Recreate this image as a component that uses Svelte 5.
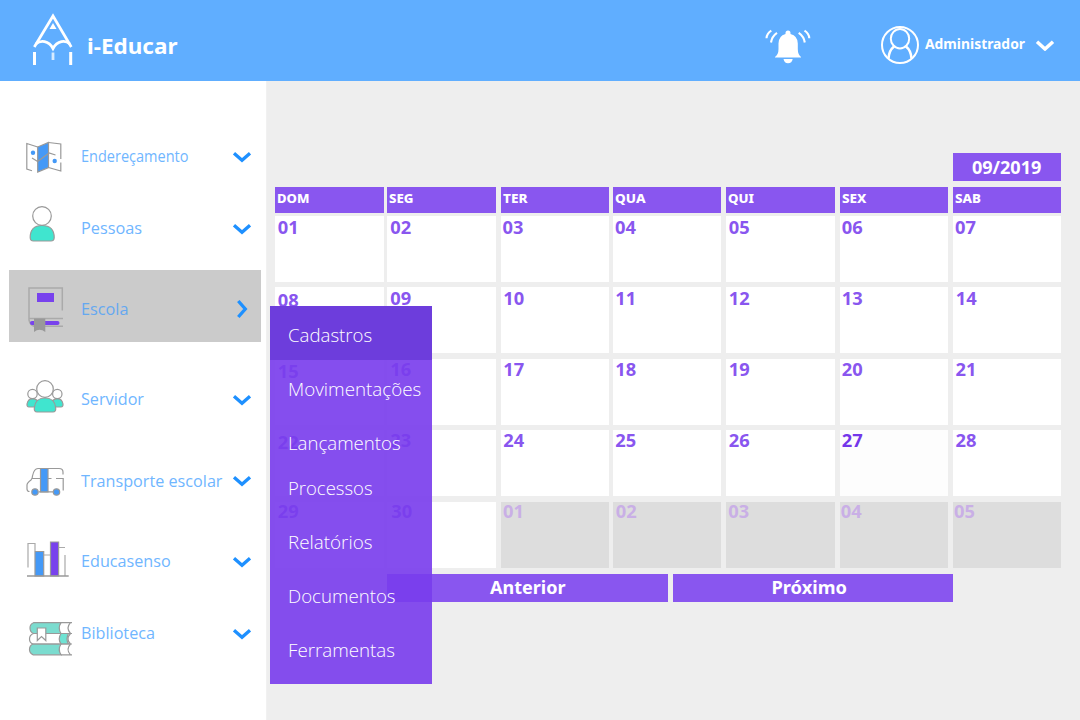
<script>
  const nav = [
    { id: 'map', label: 'Endereçamento', top: 120, w: 107.5 },
    { id: 'person', label: 'Pessoas', top: 192, w: 61 },
    { id: 'book', label: 'Escola', top: 270, w: 47.5, active: true },
    { id: 'team', label: 'Servidor', top: 363, w: 63 },
    { id: 'bus', label: 'Transporte escolar', top: 445, w: 141.5 },
    { id: 'bars', label: 'Educasenso', top: 525, w: 89.7 },
    { id: 'books', label: 'Biblioteca', top: 597, w: 74 }
  ];
  const gapBefore = (i) => (i === 0 ? nav[0].top - 81 : nav[i].top - nav[i - 1].top - 72);

  const menu = [
    { label: 'Cadastros', w: 84.2 },
    { label: 'Movimentações', w: 133.3 },
    { label: 'Lançamentos', w: 112.7 },
    { label: 'Processos', w: 84.5, short: true },
    { label: 'Relatórios', w: 84.5 },
    { label: 'Documentos', w: 107.5 },
    { label: 'Ferramentas', w: 107 }
  ];

  const days = [
    ['DOM', 32.5], ['SEG', 24.5], ['TER', 24.5], ['QUA', 30.5], ['QUI', 26], ['SEX', 24.5], ['SAB', 26]
  ];

  const inset = [
    [2.5, 3, 1.5, 2, 2.5, 2, 2],
    [2.5, 3, 2.3, 2.3, 2.5, 2, 2.8],
    [2.5, 3, 2.3, 2.3, 2.5, 2, 2.5],
    [2.5, 3, 2.3, 2.3, 2.5, 2, 2.5],
    [2.5, 4, 2, 2.7, 2, 1, 1]
  ];
  const lineHeights = [22, 21, 20, 19, 18];
  const weeks = inset.map((row, r) => ({
    line: lineHeights[r],
    cells: row.map((pad, c) => {
      const n = r * 7 + c + 1;
      return {
        text: String(n > 30 ? n - 30 : n).padStart(2, '0'),
        next: n > 30,
        today: n === 27,
        low: c === 0 && r > 0 && r < 4,
        pad
      };
    })
  }));

  function fit(node, width) {
    const natural = node.getBoundingClientRect().width;
    if (natural) node.style.transform = `scaleX(${width / natural})`;
  }
</script>

<div class="app">
  <header>
    <div class="brand">
      <svg width="44" height="56" viewBox="31 12 44 56" fill="none" stroke="#fff">
        <path d="M34.300 47 L53 16 L71.300 47" stroke-width="2.700" />
        <path d="M35.800 44 Q40 40.700 44.500 41.700 Q50 43 53 48.500 Q56 43 61.500 41.700 Q66 40.700 70 44" stroke-width="2.800" />
        <path d="M53 23 L56.500 29 H49.500 Z" fill="#fff" stroke="none" />
        <path d="M34.500 52 V65 M70.700 52 V65" stroke-width="3" />
        <path d="M53 52.500 V60" stroke-width="2.800" opacity=".75" />
      </svg>
      <span class="name fit" use:fit={90.5}>i-Educar</span>
    </div>
    <svg class="bell" width="50" height="40" viewBox="763 27 50 40">
      <path fill="#fff" d="M775 57 Q778.500 54.500 778.500 49 V43.500 Q778.500 36 785.500 34 V33 a2.500 2.500 0 0 1 5 0 V34 Q797.800 36 797.800 43.500 V49 Q797.800 54.500 801 57 V57.600 H775 Z M783.500 59 H792.700 Q792 63.200 788 63.200 Q784.300 63.200 783.500 59 Z" />
      <g fill="none" stroke="#fff" stroke-width="2.100">
        <path d="M777 32.800 Q771.800 36.500 771 42.500 M771.300 30.700 Q766.800 33.500 766.500 38.300 M798.700 32.800 Q804 36.500 804.800 42.500 M804.500 30.700 Q809 33.500 809.300 38.300" />
      </g>
    </svg>
    <div class="user">
      <svg width="40" height="40" viewBox="880 25 40 40" fill="none" stroke="#fff" stroke-width="2">
        <circle cx="900" cy="45" r="18" />
        <ellipse cx="900" cy="38.700" rx="9.200" ry="9.700" />
        <path d="M894 46.500 Q889 50.500 888.500 58.500 M906 46.500 Q911 50.500 911.500 58.500" stroke-width="2.500" />
      </svg>
      <span class="uname fit" use:fit={100}>Administrador</span>
      <svg width="20" height="12" viewBox="1035 39 20 12" fill="none" stroke="#fff" stroke-width="3.500"><path d="M1037 41.800 L1045 49 L1053 41.800" /></svg>
    </div>
  </header>

  <div class="body">
    <nav>
      {#each nav as item, i}
        <a class="item" class:active={item.active} class:tight={item.id === 'bus'} style="margin-top:{gapBefore(i)}px">
          <svg class="icon" width="60" height="72" viewBox="17 {item.top} 60 72" fill="none" stroke="#999" stroke-width="1.200">
            {#if item.id === 'map'}
              <path d="M37.700 147 L48.500 142.500 V167.500 L37.700 172 Z" fill="#4499f7" />
              <path d="M37.700 147 L26.800 143.500 V169 L32 170.800 M48.500 142.500 L60.800 144 V159 M60.800 162.500 V171 L48.500 167.500 M32 158 L37.700 161.500 L49 153 L55.500 155" />
              <circle cx="33" cy="152.700" r="2.200" fill="#4499f7" stroke="none" />
              <circle cx="54.700" cy="161" r="2.200" fill="#4499f7" stroke="none" />
            {:else if item.id === 'person'}
              <circle cx="42" cy="216" r="9.300" />
              <path d="M33.500 241 Q30.200 241 30.200 237.500 Q30.200 225.500 42 225.500 Q54.200 225.500 54.200 237.500 Q54.200 241 51 241 Z" fill="#40e5cf" />
            {:else if item.id === 'book'}
              <path d="M62.300 310.500 V288 H29 V320 Q30 324.500 34 326.300 H63 M29 318.500 H63" stroke="#aaa" stroke-width="1.500" />
              <path d="M37 293 H54 V302 H37 Z" fill="#7842ed" stroke="none" />
              <rect x="30" y="321" width="29.500" height="4" rx="2" fill="#7842ed" stroke="none" />
              <path d="M34 318.500 H45.300 V332 Q39.500 327.500 34 332 Z" fill="#999" stroke="none" />
            {:else if item.id === 'team'}
              <circle cx="32.500" cy="394" r="4.700" />
              <circle cx="57.300" cy="394" r="4.700" />
              <path d="M29 407 Q26.800 407 27 404 Q28 399 32.500 398.700 Q36 399 38 401 L34.500 407 Z M61 407 Q63.200 407 63 404 Q62 399 57.500 398.700 Q54 399 52 401 L55.500 407 Z" fill="#40e5cf" />
              <circle cx="45" cy="389" r="8.300" fill="#fff" />
              <path d="M37 412 Q34 412 34.300 408 Q35 398 45 398 Q55 398 55.700 408 Q56 412 53 412 Z" fill="#40e5cf" />
            {:else if item.id === 'bus'}
              <path d="M29.500 491.500 Q27 491.500 27 489 V485 Q27 483 31 480 Q32.500 478.500 32.500 476 Q34 468.500 38 468.500 H59 Q63 468.500 63 472 V474.500 M32 478.500 H51.500 M56 478.500 H63.200 V490.500 M39 491.800 H53" />
              <path d="M40.500 468.500 H48 V491.800 H40.500 Z" fill="#4499f7" />
              <circle cx="35" cy="492" r="3.200" fill="#4499f7" />
              <circle cx="56.500" cy="492" r="3.200" fill="#4499f7" />
            {:else if item.id === 'bars'}
              <path d="M28 567.500 V543.500 H35 V551 M44 555 H50.500 M58.500 547.500 H65 M65 555 V576" stroke="#aaa" />
              <path d="M35 551.500 H43.700 V576 H35 Z" fill="#4499f7" />
              <path d="M50.500 542 H58.600 V576 H50.500 Z" fill="#7842ed" />
              <path d="M27 576 H68.700" stroke-width="1.500" />
            {:else}
              <path d="M33.500 622.700 H61 Q57.500 628 61 633.500 H33.500 Q30 632 30 628 Q30 624 33.500 622.700 Z" fill="#7bdccf" />
              <path d="M61 633.500 H68.500 Q65.500 639 68.500 644 H61 Q57.500 639 61 633.500 Z" fill="#6fe3d3" />
              <path d="M33 644 H61 Q57.500 649.500 61 654.800 H33 Q29.500 653 29.500 649.500 Q29.500 645.500 33 644 Z" fill="#7bdccf" />
              <path d="M61 622.700 H72 M70.500 622.700 Q65.500 628 70.500 633.500 M72 633.500 H33.500 Q29.500 635 29.500 639 Q29.500 643 33 644 H72 M70.500 633.500 Q65.500 639 70.500 644 Q65.500 649.500 70.500 654.800 M61 654.800 H72" />
              <path d="M37.300 628 H45.800 V640.500 L41.500 636.500 L37.300 640.500 Z" fill="#fff" />
            {/if}
          </svg>
          <span class="label fit" use:fit={item.w}>{item.label}</span>
          {#if item.active}
            <svg class="chev right" width="12" height="20" viewBox="0 0 12 20"><path d="M2.300 2 L9.300 10 L2.300 18" /></svg>
          {:else}
            <svg class="chev" width="20" height="12" viewBox="0 0 20 12"><path d="M2 2.200 L10 9.200 L18 2.200" /></svg>
          {/if}
        </a>
      {/each}
    </nav>

    <main>
      <div class="month"><span class="fit mid" use:fit={69.500}>09/2019</span></div>
      <div class="row days">
        {#each days as [d, w]}
          <div class="day"><span class="fit" use:fit={w}>{d}</span></div>
        {/each}
      </div>
      <div class="weeks">
        {#each weeks as week}
          <div class="row" style="line-height:{week.line}px">
            {#each week.cells as c}
              <div class="cell" class:next={c.next} class:today={c.today} class:low={c.low} style="padding-left:{c.pad}px">{c.text}</div>
            {/each}
          </div>
        {/each}
      </div>
      <div class="pager">
        <button><span class="fit mid" use:fit={75.500}>Anterior</span></button>
        <button><span class="fit mid nudge" use:fit={75.500}>Próximo</span></button>
      </div>
    </main>
  </div>

  <div class="menu">
    {#each menu as m, i}
      <div class="entry" class:first={i === 0} class:short={m.short}><span class="fit" use:fit={m.w}>{m.label}</span></div>
    {/each}
  </div>
</div>

<style>
  .app {
    position: relative;
    width: 1080px;
    height: 720px;
    overflow: hidden;
    background: #eee;
    font-family: 'Noto Sans', 'Open Sans', sans-serif;
    display: flex;
    flex-direction: column;
  }
  .fit { display: inline-block; transform-origin: 0 50%; white-space: nowrap; }
  .mid { transform-origin: 50% 50%; }
  header {
    height: 81px;
    flex: none;
    box-sizing: border-box;
    background: #60aeff;
    display: flex;
    color: #fff;
    font-weight: 700;
  }
  .brand { display: flex; padding: 12px 0 0 31px; width: 732px; }
  .name { font-size: 22px; line-height: 30px; margin: 18px 0 0 12px; height: 30px; }
  .bell { margin-top: 27px; flex: none; }
  .user { display: flex; margin-left: 67px; padding-top: 25px; width: 175px; }
  .uname { font-size: 14.800px; line-height: 20px; height: 20px; margin: 8px 0 0 4.700px; }
  .user svg:last-child { margin: 14px 0 0 auto; }
  .body { display: flex; flex: 1; }
  nav { width: 267px; background: #fff; display: flex; flex-direction: column; border-right: 1px solid #f1f1f1; box-sizing: border-box; }
  .item {
    display: flex;
    align-items: flex-start;
    height: 72px;
    flex: none;
    margin-left: 9px;
    width: 252px;
    box-sizing: border-box;
    padding-left: 8px;
  }
  .icon { flex: none; }
  .label { font-family: 'Open Sans', 'Noto Sans', sans-serif; font-size: 17px; font-weight: 400; line-height: 24px; margin: 24px 0 0 3.500px; color: #70b6ff; }
  .chev { flex: none; margin: 31px 9px 0 auto; fill: none; stroke: #1e90ff; stroke-width: 3.300; }
  .tight .chev { margin-top: 30px; }
  .item.active { background: #cbcbcb; }
  .active .label { margin-top: 27px; color: #65a8f0; }
  .item .chev.right { margin: 29px 13px 0 auto; }
  main { padding: 72px 0 0 8.300px; display: flex; flex-direction: column; }
  .month {
    margin-left: 677.700px;
    width: 108.400px;
    height: 28px;
    background: #8956ef;
    color: #fff;
    font-weight: 700;
    font-size: 18px;
    line-height: 28px;
    text-align: center;
  }
  .month .fit { margin-right: 1px; }
  .row { display: grid; grid-template-columns: 112px 113.700px 112px 113.200px 113.600px 113.200px 108.400px; }
  .days { margin-top: 6px; height: 26px; }
  .day { width: 106.600px; height: 26px; padding-left: 1.800px; background: #8956ef; color: #fff; font-weight: 800; font-size: 12.700px; line-height: 23px; }
  .weeks { margin-top: 3px; display: flex; flex-direction: column; gap: 5.400px; }
  .cell {
    box-sizing: border-box;
    width: 108.400px;
    height: 66px;
    background: #fff;
    color: #8956ef;
    font-weight: 700;
    font-size: 18.300px;
  }
  .low { padding-top: 2px; }
  .today { background: #fdfdfd; color: #7437ea; }
  .next { background: #ddd; color: #c9afe6; }
  .pager { display: flex; gap: 5.500px; margin: 6.400px 0 0 112px; }
  button {
    width: 280.300px;
    height: 28px;
    padding: 0;
    border: 0;
    background: #8956ef;
    color: #fff;
    font: 700 18px/24px 'Noto Sans', sans-serif;
  }
  button .fit { padding-bottom: 2px; }
  .nudge { margin-right: 8px; }
  .menu {
    position: absolute;
    left: 270px;
    top: 306px;
    width: 162px;
    height: 378px;
    background: rgba(121, 60, 236, .91);
    color: #fff;
    display: flex;
    flex-direction: column;
  }
  .entry { height: 54px; line-height: 58px; padding-left: 18px; font-size: 18.500px; font-family: 'Open Sans', 'Noto Sans', sans-serif; font-weight: 360; }
  .entry.short { height: 45px; line-height: 40px; }
  .entry.first { background: #6d3ddc; }
</style>
